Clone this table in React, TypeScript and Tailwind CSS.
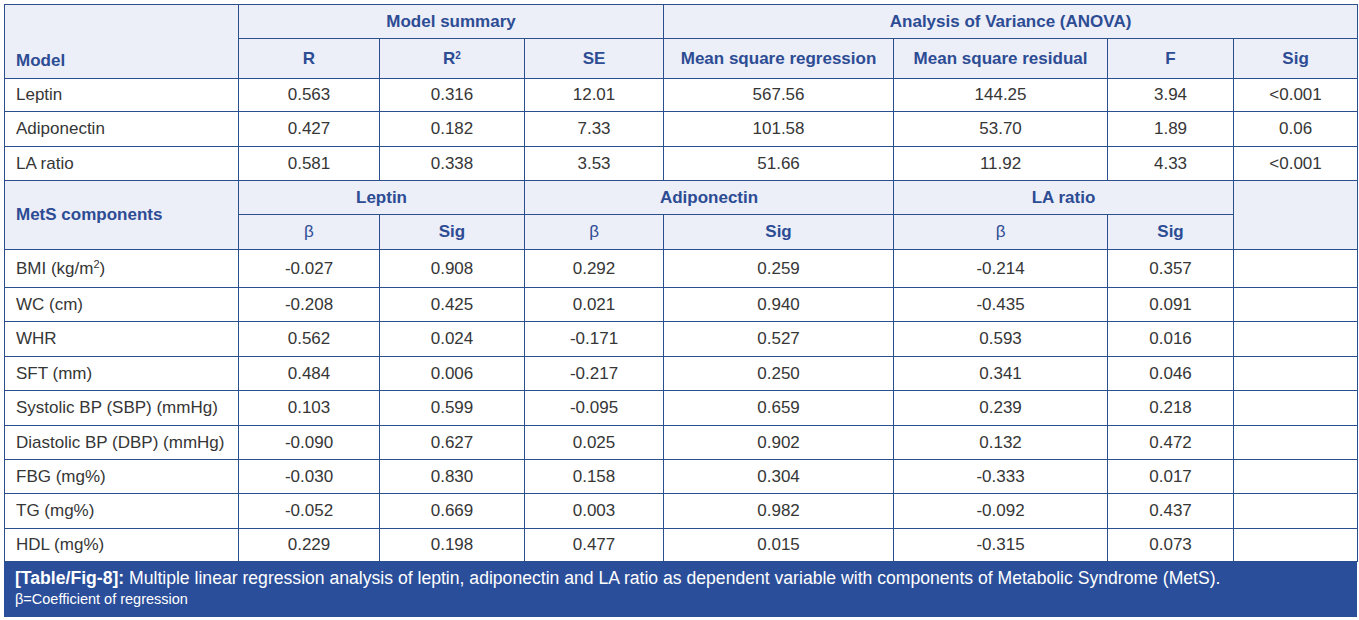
const summaryRows = [
  ['Leptin', '0.563', '0.316', '12.01', '567.56', '144.25', '3.94', '<0.001', 'h-[33px]'],
  ['Adiponectin', '0.427', '0.182', '7.33', '101.58', '53.70', '1.89', '0.06', 'h-[35px]'],
  ['LA ratio', '0.581', '0.338', '3.53', '51.66', '11.92', '4.33', '<0.001', 'h-[34px]'],
];

const metsRows: { label: React.ReactNode; vals: string[]; h: string }[] = [
  { label: <>BMI (kg/m<sup className="text-[11px]">2</sup>)</>, vals: ['-0.027', '0.908', '0.292', '0.259', '-0.214', '0.357'], h: 'h-[38px]' },
  { label: 'WC (cm)', vals: ['-0.208', '0.425', '0.021', '0.940', '-0.435', '0.091'], h: 'h-[34px]' },
  { label: 'WHR', vals: ['0.562', '0.024', '-0.171', '0.527', '0.593', '0.016'], h: 'h-[35px]' },
  { label: 'SFT (mm)', vals: ['0.484', '0.006', '-0.217', '0.250', '0.341', '0.046'], h: 'h-[34px]' },
  { label: 'Systolic BP (SBP) (mmHg)', vals: ['0.103', '0.599', '-0.095', '0.659', '0.239', '0.218'], h: 'h-[35px]' },
  { label: 'Diastolic BP (DBP) (mmHg)', vals: ['-0.090', '0.627', '0.025', '0.902', '0.132', '0.472'], h: 'h-[34px]' },
  { label: 'FBG (mg%)', vals: ['-0.030', '0.830', '0.158', '0.304', '-0.333', '0.017'], h: 'h-[34px]' },
  { label: 'TG (mg%)', vals: ['-0.052', '0.669', '0.003', '0.982', '-0.092', '0.437'], h: 'h-[35px]' },
  { label: 'HDL (mg%)', vals: ['0.229', '0.198', '0.477', '0.015', '-0.315', '0.073'], h: 'h-[33px]' },
];

const border = 'border border-[#2b4f8e] p-0';
const cell = `${border} align-middle`;
const head = `${cell} bg-[#eceef8] text-[#2c4c94] font-bold text-center`;

export default function App() {
  return (
    <div className="bg-white pl-1 pt-1 font-['Liberation_Sans',Arial,sans-serif] text-[17px] text-[#363636]">
      <div className="w-[1353px]">
        <table className="w-full table-fixed border-collapse">
          <colgroup>
            <col className="w-[234px]" />
            <col className="w-[141px]" />
            <col className="w-[145px]" />
            <col className="w-[139px]" />
            <col className="w-[230px]" />
            <col className="w-[214px]" />
            <col className="w-[126px]" />
            <col className="w-[124px]" />
          </colgroup>
          <tbody>
            <tr className="h-[34px]">
              <td rowSpan={2} className={`${border} align-bottom bg-[#eceef8] text-[#2c4c94] font-bold text-left px-[11px] pb-[5px]`}>Model</td>
              <td colSpan={3} className={head}>Model summary</td>
              <td colSpan={4} className={head}>Analysis of Variance (ANOVA)</td>
            </tr>
            <tr className="h-[40px]">
              <td className={head}>R</td>
              <td className={head}>R<sup className="text-[10px]">2</sup></td>
              <td className={head}>SE</td>
              <td className={head}>Mean square regression</td>
              <td className={head}>Mean square residual</td>
              <td className={head}>F</td>
              <td className={head}>Sig</td>
            </tr>
            {summaryRows.map((r) => (
              <tr key={r[0]} className={r[8]}>
                <td className={`${cell} text-left px-[11px]`}>{r[0]}</td>
                {r.slice(1, 8).map((v, i) => (
                  <td key={i} className={`${cell} text-center`}>{v}</td>
                ))}
              </tr>
            ))}
            <tr className="h-[34px]">
              <td rowSpan={2} className={`${cell} bg-[#eceef8] text-[#2c4c94] font-bold text-left px-[11px]`}>MetS components</td>
              <td colSpan={2} className={head}>Leptin</td>
              <td colSpan={2} className={head}>Adiponectin</td>
              <td colSpan={2} className={head}>LA ratio</td>
              <td rowSpan={2} className={head}></td>
            </tr>
            <tr className="h-[35px]">
              <td className={`${head} font-normal`}>β</td>
              <td className={head}>Sig</td>
              <td className={`${head} font-normal`}>β</td>
              <td className={head}>Sig</td>
              <td className={`${head} font-normal`}>β</td>
              <td className={head}>Sig</td>
            </tr>
            {metsRows.map((r, idx) => (
              <tr key={idx} className={r.h}>
                <td className={`${cell} text-left px-[11px]`}>{r.label}</td>
                {r.vals.map((v, i) => (
                  <td key={i} className={`${cell} text-center`}>{v}</td>
                ))}
                <td className={cell}></td>
              </tr>
            ))}
          </tbody>
        </table>
        <div className="bg-[#2a4e9a] text-white px-[11px] pt-[6px] h-[55px]">
          <p className="text-[17.6px] leading-[21px]">
            <span className="font-bold">[Table/Fig-8]:</span> Multiple linear regression analysis of leptin, adiponectin and LA ratio as dependent variable with components of Metabolic Syndrome (MetS).
          </p>
          <p className="text-[14.5px] leading-[21px]">β=Coefficient of regression</p>
        </div>
      </div>
    </div>
  );
}
